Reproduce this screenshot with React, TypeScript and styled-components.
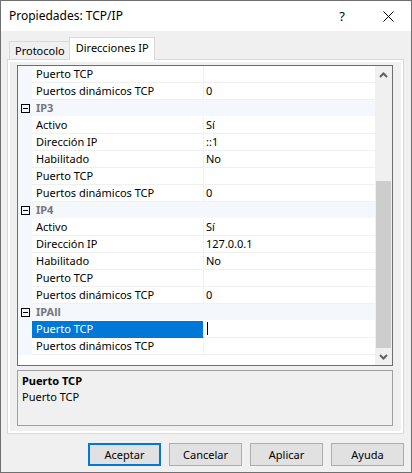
import React from 'react'
import styled, { createGlobalStyle } from 'styled-components'

type Row =
    | { kind: 'cat'; label: string }
    | { kind: 'prop'; label: string; value?: string; selected?: boolean }

const rows: Row[] = [
    { kind: 'prop', label: 'Puerto TCP' },
    { kind: 'prop', label: 'Puertos dinámicos TCP', value: '0' },
    { kind: 'cat', label: 'IP3' },
    { kind: 'prop', label: 'Activo', value: 'Sí' },
    { kind: 'prop', label: 'Dirección IP', value: '::1' },
    { kind: 'prop', label: 'Habilitado', value: 'No' },
    { kind: 'prop', label: 'Puerto TCP' },
    { kind: 'prop', label: 'Puertos dinámicos TCP', value: '0' },
    { kind: 'cat', label: 'IP4' },
    { kind: 'prop', label: 'Activo', value: 'Sí' },
    { kind: 'prop', label: 'Dirección IP', value: '127.0.0.1' },
    { kind: 'prop', label: 'Habilitado', value: 'No' },
    { kind: 'prop', label: 'Puerto TCP' },
    { kind: 'prop', label: 'Puertos dinámicos TCP', value: '0' },
    { kind: 'cat', label: 'IPAll' },
    { kind: 'prop', label: 'Puerto TCP', selected: true },
    { kind: 'prop', label: 'Puertos dinámicos TCP' },
]

const buttons = ['Aceptar', 'Cancelar', 'Aplicar', 'Ayuda']

const Chevron = ({ down = false }: { down?: boolean }) => (
    <svg width="9" height="6" viewBox="0 0 9 6">
        <polyline
            points={down ? '1,1 4.5,4.5 8,1' : '1,5 4.5,1.5 8,5'}
            fill="none"
            stroke="#606060"
            strokeWidth="2"
        />
    </svg>
)

const App = () => {
    return (
        <>
            <GlobalStyle />
            <Window>
                <TitleBar>
                    <Title>Propiedades: TCP/IP</Title>
                    <CaptionButton>?</CaptionButton>
                    <CaptionButton>
                        <svg width="11" height="11" viewBox="0 0 11 11">
                            <path d="M0.5 0.5 L10.5 10.5 M10.5 0.5 L0.5 10.5" stroke="#000" strokeWidth="1" />
                        </svg>
                    </CaptionButton>
                </TitleBar>
                <Body>
                    <TabStrip>
                        <Tab>Protocolo</Tab>
                        <Tab $active>Direcciones IP</Tab>
                    </TabStrip>
                    <TabPanel>
                        <PropertyGrid>
                            <RowList>
                                {rows.map((row, i) =>
                                    row.kind === 'cat' ? (
                                        <GridRow key={i} $category>
                                            <Gutter>
                                                <Collapse />
                                            </Gutter>
                                            <CategoryLabel>{row.label}</CategoryLabel>
                                        </GridRow>
                                    ) : (
                                        <GridRow key={i}>
                                            <Gutter />
                                            <NameCell $selected={row.selected}>{row.label}</NameCell>
                                            <ValueCell>
                                                {row.value}
                                                {row.selected && <Caret />}
                                            </ValueCell>
                                        </GridRow>
                                    )
                                )}
                            </RowList>
                            <ScrollBar>
                                <ArrowButton><Chevron /></ArrowButton>
                                <Track>
                                    <Thumb $size={167} />
                                </Track>
                                <ArrowButton><Chevron down /></ArrowButton>
                            </ScrollBar>
                        </PropertyGrid>
                        <Description>
                            <DescTitle>Puerto TCP</DescTitle>
                            <DescText>Puerto TCP</DescText>
                        </Description>
                    </TabPanel>
                    <ButtonRow>
                        {buttons.map((b, i) => (
                            <DialogButton key={b} $default={i === 0}>{b}</DialogButton>
                        ))}
                    </ButtonRow>
                </Body>
            </Window>
        </>
    )
}

export default App

const GlobalStyle = createGlobalStyle`
    html, body {
        margin: 0;
        padding: 0;
        background: #f0f0f0;
    }
    body {
        font-family: "Segoe UI", "Noto Sans", sans-serif;
        font-size: 11px;
        color: #000;
    }
    * {
        box-sizing: border-box;
    }
`

const Window = styled.div`
    width: 412px;
    height: 473px;
    border: 1px solid #707070;
    background: #f0f0f0;
    display: flex;
    flex-direction: column;
    overflow: hidden;
`

const TitleBar = styled.div`
    height: 30px;
    background: #fff;
    display: flex;
    align-items: center;
    flex-shrink: 0;
`

const Title = styled.div`
    flex: 1;
    padding-left: 8px;
    font-size: 12px;
    line-height: 16px;
`

const CaptionButton = styled.div`
    width: 46px;
    height: 30px;
    display: flex;
    align-items: center;
    justify-content: center;
    font-size: 13px;
`

const Body = styled.div`
    flex: 1;
    display: flex;
    flex-direction: column;
    padding: 6px 7px 0 6px;
`

const TabStrip = styled.div`
    height: 22px;
    display: flex;
    align-items: flex-end;
    padding-left: 2px;
`

const Tab = styled.div<{ $active?: boolean }>`
    position: relative;
    z-index: ${({ $active }) => ($active ? 1 : 0)};
    height: ${({ $active }) => ($active ? '23px' : '18px')};
    margin-bottom: ${({ $active }) => ($active ? '-1px' : '0')};
    margin-left: ${({ $active }) => ($active ? '-1px' : '0')};
    padding: ${({ $active }) => ($active ? '2px 5px 0 6px' : '1px 4px 0 5px')};
    background: ${({ $active }) => ($active ? '#fff' : '#f0f0f0')};
    border: 1px solid #d9d9d9;
    border-bottom: none;
    line-height: 16px;
    white-space: nowrap;
`

const TabPanel = styled.div`
    height: 375px;
    border: 1px solid #d9d9d9;
    box-shadow: inset 0 0 0 2px #fff;
    background: #f0f0f0;
    padding: 5px 10px 7px 9px;
    display: flex;
    flex-direction: column;
`

const PropertyGrid = styled.div`
    height: 301px;
    border: 1px solid #6d6d6d;
    display: flex;
    background: #fff;
`

const RowList = styled.div`
    flex: 1;
    display: flex;
    flex-direction: column;
    overflow: hidden;
`

const GridRow = styled.div<{ $category?: boolean }>`
    height: 17px;
    display: flex;
    flex-shrink: 0;
    background: ${({ $category }) => ($category ? '#f4f7fc' : '#fff')};
`

const Gutter = styled.div`
    width: 14px;
    flex-shrink: 0;
    background: #f4f7fc;
    display: flex;
    align-items: center;
    justify-content: center;
    padding-left: 1px;
`

const Collapse = styled.div`
    width: 9px;
    height: 9px;
    border: 1px solid #000;
    display: flex;
    align-items: center;
    justify-content: center;
    margin-top: -1px;

    &::after {
        content: '';
        width: 5px;
        height: 1px;
        background: #000;
    }
`

const CategoryLabel = styled.div`
    flex: 1;
    padding-left: 4px;
    font-weight: bold;
    color: #777;
    line-height: 16px;
    border-bottom: 1px solid #fff;
`

const NameCell = styled.div<{ $selected?: boolean }>`
    width: 172px;
    flex-shrink: 0;
    padding-left: 4px;
    line-height: 16px;
    white-space: nowrap;
    overflow: hidden;
    background: ${({ $selected }) => ($selected ? '#0078d7' : 'transparent')};
    color: ${({ $selected }) => ($selected ? '#fff' : '#000')};
    border-bottom: 1px solid ${({ $selected }) => ($selected ? '#0078d7' : '#f0f0f0')};
    border-right: 1px solid #f0f0f0;
`

const ValueCell = styled.div`
    flex: 1;
    padding-left: 2px;
    line-height: 16px;
    border-bottom: 1px solid #f0f0f0;
    display: flex;
    align-items: center;
`

const Caret = styled.span`
    width: 1px;
    height: 13px;
    background: #000;
    margin-left: 1px;
    margin-top: -1px;
`

const ScrollBar = styled.div`
    width: 17px;
    flex-shrink: 0;
    background: #f0f0f0;
    display: flex;
    flex-direction: column;
`

const ArrowButton = styled.div`
    height: 17px;
    display: flex;
    align-items: center;
    justify-content: center;
`

const Track = styled.div`
    flex: 1;
    display: flex;
    flex-direction: column;
    justify-content: flex-end;
    padding: 0 1px;
`

const Thumb = styled.div<{ $size: number }>`
    height: ${({ $size }) => $size}px;
    background: #cdcdcd;
`

const Description = styled.div`
    margin-top: 4px;
    height: 56px;
    border: 1px solid #a0a0a0;
    background: #f0f0f0;
    padding: 2px 4px;
    line-height: 16px;
`

const DescTitle = styled.div`
    font-weight: bold;
`

const DescText = styled.div``

const ButtonRow = styled.div`
    display: flex;
    justify-content: flex-end;
    gap: 8px;
    padding-top: 9px;
`

const DialogButton = styled.div<{ $default?: boolean }>`
    width: 73px;
    height: 23px;
    display: flex;
    align-items: center;
    justify-content: center;
    background: #e1e1e1;
    border: ${({ $default }) => ($default ? '2px solid #0078d7' : '1px solid #adadad')};
`
